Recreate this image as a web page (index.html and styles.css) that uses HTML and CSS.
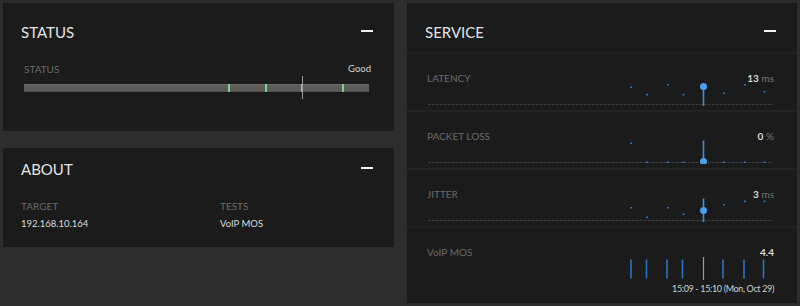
FILE: index.html
```html
<!DOCTYPE html>
<html>
<head>
<meta charset="utf-8">
<link rel="stylesheet" href="styles.css">
</head>
<body>
<div class="page">
  <div class="col-left">
    <section class="card card-status">
      <header class="card-head"><h2 class="card-title">STATUS</h2><span class="minus"></span></header>
      <div class="status-body">
        <div class="kv-row"><span class="label">STATUS</span><span class="good">Good</span></div>
        <div class="bar">
          <span class="tick" style="left:204px"></span>
          <span class="tick" style="left:241px"></span>
          <span class="tick" style="left:277px"></span>
          <span class="tick" style="left:318px"></span>
          <span class="bar-cursor" style="left:277px"></span>
        </div>
      </div>
    </section>
    <section class="card card-about">
      <header class="card-head"><h2 class="card-title">ABOUT</h2><span class="minus"></span></header>
      <div class="about-grid">
        <span class="label">TARGET</span>
        <span class="label">TESTS</span>
        <span class="val">192.168.10.164</span>
        <span class="val">VoIP MOS</span>
      </div>
    </section>
  </div>

  <section class="card card-service">
    <header class="card-head service-head"><h2 class="card-title">SERVICE</h2><span class="minus"></span></header>

    <div class="srow">
      <div class="srow-top"><span class="label">LATENCY</span><span class="metric"><b>13</b> <i>ms</i></span></div>
      <svg class="chart" width="345" height="24" viewBox="0 0 345 24">
        <line class="base" x1="0" y1="22.5" x2="345" y2="22.5"/>
        <rect class="pt" x="202" y="4.5" width="2" height="1.5"/>
        <rect class="pt" x="218" y="12" width="2" height="1.5"/>
        <rect class="pt" x="239" y="2" width="2" height="1.5"/>
        <rect class="pt" x="254.5" y="12" width="2" height="1.5"/>
        <rect class="pt" x="295" y="10.5" width="2" height="1.5"/>
        <rect class="pt" x="316" y="2" width="2" height="1.5"/>
        <rect class="pt" x="335.5" y="9" width="2" height="1.5"/>
        <line class="cursor" x1="275.5" y1="4" x2="275.5" y2="24"/>
        <circle class="hl" cx="275.5" cy="4.5" r="3.5"/>
      </svg>
    </div>

    <div class="srow">
      <div class="srow-top"><span class="label">PACKET LOSS</span><span class="metric"><b>0</b> <i>%</i></span></div>
      <svg class="chart" width="345" height="24" viewBox="0 0 345 24">
        <line class="base" x1="0" y1="22.5" x2="345" y2="22.5"/>
        <rect class="pt" x="202" y="2.5" width="2" height="1.5"/>
        <rect class="pt" x="218" y="21.5" width="2" height="1.5"/>
        <rect class="pt" x="239" y="21.5" width="2" height="1.5"/>
        <rect class="pt" x="254.5" y="21.5" width="2" height="1.5"/>
        <rect class="pt" x="295" y="21.5" width="2" height="1.5"/>
        <rect class="pt" x="316" y="21.5" width="2" height="1.5"/>
        <rect class="pt" x="335.5" y="21.5" width="2" height="1.5"/>
        <line class="cursor" x1="275.5" y1="0.5" x2="275.5" y2="24"/>
        <circle class="hl" cx="275.5" cy="21.5" r="3.5"/>
      </svg>
    </div>

    <div class="srow">
      <div class="srow-top"><span class="label">JITTER</span><span class="metric"><b>3</b> <i>ms</i></span></div>
      <svg class="chart" width="345" height="24" viewBox="0 0 345 24">
        <line class="base" x1="0" y1="22.5" x2="345" y2="22.5"/>
        <rect class="pt" x="202" y="9" width="2" height="1.5"/>
        <rect class="pt" x="218" y="18.5" width="2" height="1.5"/>
        <rect class="pt" x="239" y="9" width="2" height="1.5"/>
        <rect class="pt" x="254.5" y="15.5" width="2" height="1.5"/>
        <rect class="pt" x="295" y="6" width="2" height="1.5"/>
        <rect class="pt" x="316" y="2.5" width="2" height="1.5"/>
        <rect class="pt" x="335.5" y="2.5" width="2" height="1.5"/>
        <line class="cursor" x1="275.5" y1="0.5" x2="275.5" y2="24"/>
        <circle class="hl" cx="275.5" cy="12.5" r="3.5"/>
      </svg>
    </div>

    <div class="srow srow-last">
      <div class="srow-top"><span class="label">VoIP MOS</span><span class="metric"><b>4.4</b></span></div>
      <svg class="chart" width="345" height="24" viewBox="0 0 345 24">
        <line class="bar-v" x1="203" y1="3.5" x2="203" y2="22.5"/>
        <line class="bar-v" x1="218.5" y1="3.5" x2="218.5" y2="22.5"/>
        <line class="bar-v" x1="239" y1="3.5" x2="239" y2="22.5"/>
        <line class="bar-v" x1="254.5" y1="3.5" x2="254.5" y2="22.5"/>
        <line class="bar-v" x1="295" y1="3.5" x2="295" y2="22.5"/>
        <line class="bar-v" x1="316" y1="3.5" x2="316" y2="22.5"/>
        <line class="bar-v" x1="335.5" y1="3.5" x2="335.5" y2="22.5"/>
        <line class="cursor-gray" x1="275.5" y1="1" x2="275.5" y2="24"/>
      </svg>
      <div class="stamp">15:09 - 15:10 (Mon, Oct 29)</div>
    </div>
  </section>
</div>
</body>
</html>
```

FILE: styles.css
```css
* { box-sizing: border-box; }
html, body { margin: 0; padding: 0; }
body {
  background: #2d2d2d;
  font-family: Lato, "Open Sans", sans-serif;
  width: 800px;
  height: 306px;
  overflow: hidden;
}
.page {
  display: grid;
  grid-template-columns: 391px 390px;
  column-gap: 13px;
  padding: 3px 3px 0 3px;
}
.col-left {
  display: flex;
  flex-direction: column;
  gap: 17px;
}
.card {
  background: #1b1b1b;
}
.card-status { height: 128px; }
.card-about { height: 99px; }
.card-service { height: 300px; }

.card-head {
  display: flex;
  justify-content: space-between;
  align-items: flex-start;
  padding: 19px 21px 0 18px;
}
.card-about .card-head { padding-top: 11px; }
.card-title {
  margin: 0;
  font-size: 15px;
  line-height: 20px;
  font-weight: 400;
  color: #e4e4e4;
}
.minus {
  display: block;
  width: 12px;
  height: 2px;
  margin-top: 8px;
  background: #f2f2f2;
}

.label {
  font-size: 10px;
  line-height: 12px;
  color: #6a6a6a;
}

.status-body {
  padding: 21px 23px 0 21px;
}
.kv-row {
  display: flex;
  justify-content: space-between;
  line-height: 12px;
}
.good {
  font-size: 9.5px;
  line-height: 12px;
  color: #d6d6d6;
}
.bar {
  position: relative;
  height: 8px;
  margin: 9px 2px 0 0;
  background: #5d5d5d;
  border-top: 1px solid #6a6a6a;
  border-bottom: 1px solid #505050;
}
.tick {
  position: absolute;
  top: -1px;
  width: 2px;
  height: 8px;
  background: #74d38c;
}
.bar-cursor {
  position: absolute;
  top: -9px;
  width: 1px;
  height: 23px;
  background: #9a9a9a;
  margin-left: 1px;
}

.about-grid {
  display: grid;
  grid-template-columns: 199px 1fr;
  row-gap: 5px;
  padding: 21px 18px 0 18px;
}
.val {
  font-size: 9.5px;
  line-height: 14px;
  color: #dcdcdc;
}

.service-head {
  height: 51px;
  border-bottom: 2px solid #222222;
}
.srow {
  height: 58px;
  padding: 18px 23px 0 20px;
  border-bottom: 2px solid #222222;
}
.srow-last {
  height: 73px;
  border-bottom: none;
}
.srow-top {
  display: flex;
  justify-content: space-between;
  align-items: baseline;
  line-height: 12px;
  height: 10px;
}
.metric {
  font-size: 10px;
  line-height: 12px;
}
.metric b {
  font-weight: 700;
  color: #dadada;
}
.metric i {
  font-style: normal;
  color: #777777;
}
.chart {
  display: block;
  margin-left: 1px;
}
.base {
  stroke: #3b3b3b;
  stroke-width: 1;
  stroke-dasharray: 3 1;
}
.pt { fill: #2f73bf; }
.cursor {
  stroke: #3d8ee0;
  stroke-width: 1.6;
}
.hl { fill: #4aa0f0; }
.bar-v {
  stroke: #2d72c2;
  stroke-width: 1.6;
}
.cursor-gray {
  stroke: #9c9c9c;
  stroke-width: 1.2;
}
.stamp {
  margin-top: 3px;
  text-align: right;
  font-size: 9px;
  letter-spacing: -0.35px;
  line-height: 12px;
  color: #cfcfcf;
}
```
